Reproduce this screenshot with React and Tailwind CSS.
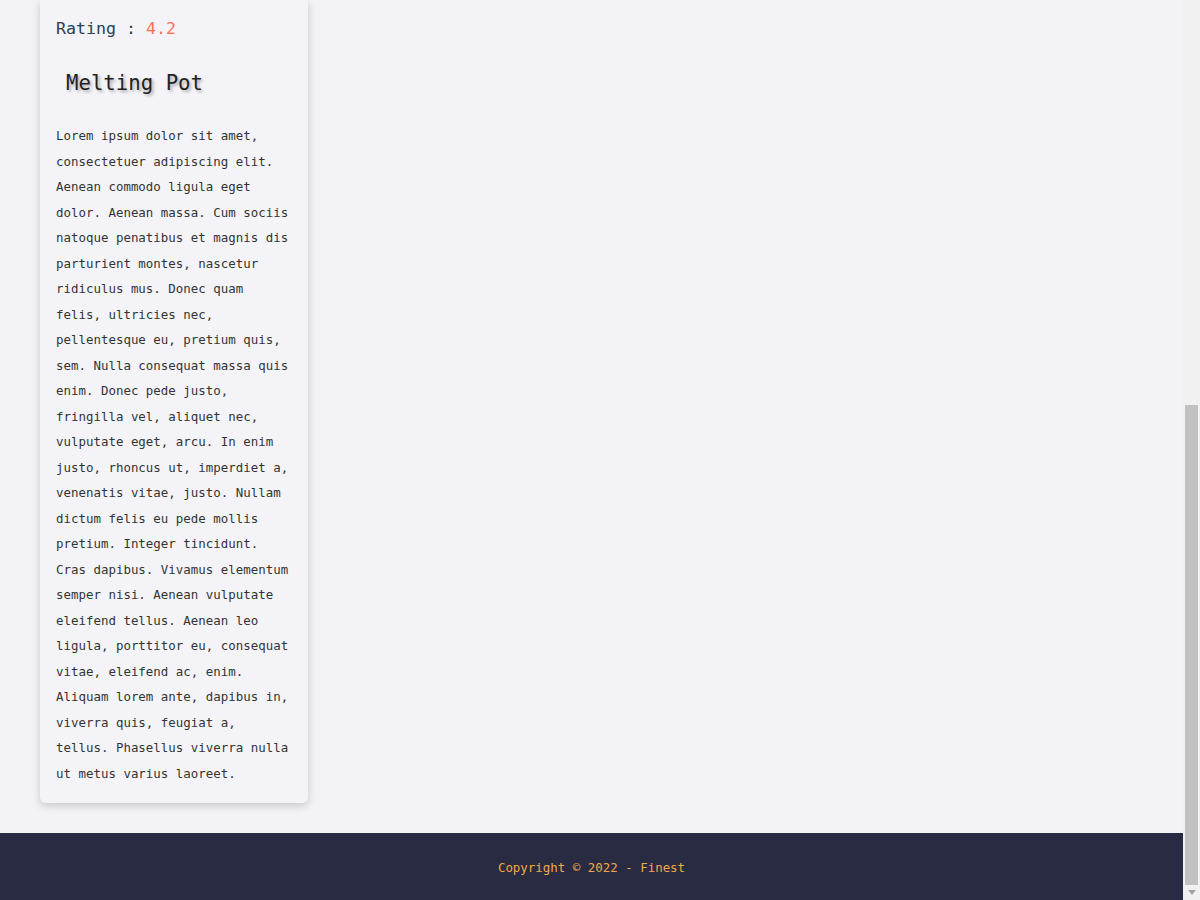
import React from "react";

const restaurant = {
  name: "Melting Pot",
  rating: 4.2,
  description:
    "Lorem ipsum dolor sit amet, consectetuer adipiscing elit. Aenean commodo ligula eget dolor. Aenean massa. Cum sociis natoque penatibus et magnis dis parturient montes, nascetur ridiculus mus. Donec quam felis, ultricies nec, pellentesque eu, pretium quis, sem. Nulla consequat massa quis enim. Donec pede justo, fringilla vel, aliquet nec, vulputate eget, arcu. In enim justo, rhoncus ut, imperdiet a, venenatis vitae, justo. Nullam dictum felis eu pede mollis pretium. Integer tincidunt. Cras dapibus. Vivamus elementum semper nisi. Aenean vulputate eleifend tellus. Aenean leo ligula, porttitor eu, consequat vitae, eleifend ac, enim. Aliquam lorem ante, dapibus in, viverra quis, feugiat a, tellus. Phasellus viverra nulla ut metus varius laoreet.",
};

function RestaurantCard({ item }) {
  return (
    <div className="w-[268px] bg-[#f4f4f8] rounded-b-md shadow-[0_3px_8px_rgba(0,0,0,0.18)] px-4 pt-[17px] pb-[17px]">
      <div className="text-[16.6px] leading-[24px] text-[#2c3e50]">
        Rating : <span className="text-[#ff6f55]">{item.rating}</span>
      </div>
      <h2 className="mt-[27px] pl-[10px] text-[20.7px] leading-[30px] text-[#222] [text-shadow:2px_2px_3px_rgba(0,0,0,0.3)]">
        {item.name}
      </h2>
      <p className="mt-[25px] text-[12.45px] leading-[25.5px] text-[#333]">
        {item.description}
      </p>
    </div>
  );
}

export default function App() {
  return (
    <div className="h-[900px] overflow-hidden flex bg-[#f3f3f7] font-['DejaVu_Sans_Mono',monospace]">
      <div className="flex-1 flex flex-col">
        <main className="flex-1 px-10">
          <RestaurantCard item={restaurant} />
        </main>
        <footer className="h-[67px] pt-1 bg-[#292b42] flex items-center justify-center">
          <span className="text-[12.45px] text-[#f3a847]">Copyright © 2022 - Finest</span>
        </footer>
      </div>
      {/* scrollbar as it sits in the screenshot */}
      <div className="w-[17px] bg-[#f1f1f1] flex flex-col">
        <div className="h-[405px]" />
        <div className="mx-[2px] h-[480px] bg-[#c1c1c1]" />
        <div className="flex-1 flex items-center justify-center">
          <svg width="8" height="5" viewBox="0 0 8 5">
            <path d="M0 0h8L4 5z" fill="#a3a3a3" />
          </svg>
        </div>
      </div>
    </div>
  );
}
